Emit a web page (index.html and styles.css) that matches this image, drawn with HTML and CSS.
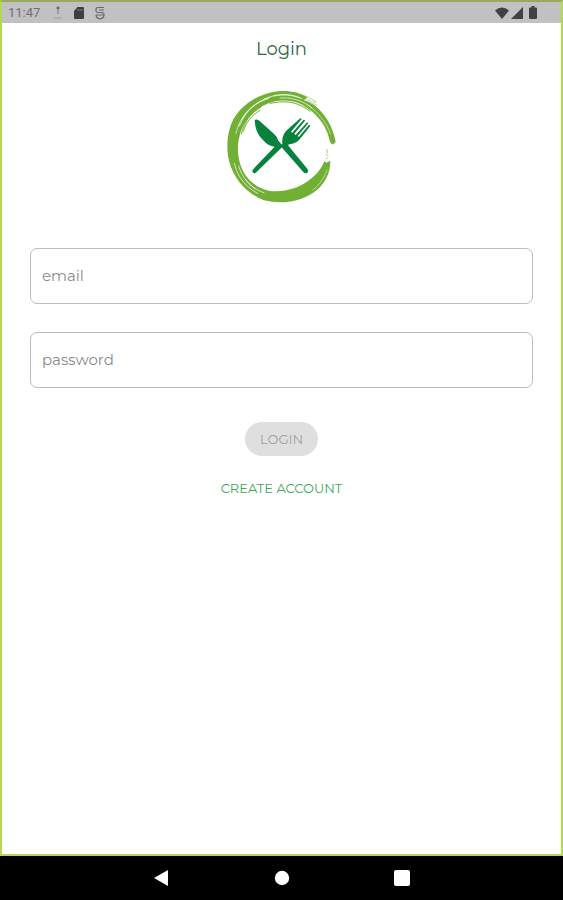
FILE: index.html
```html
<!DOCTYPE html>
<html lang="en">
<head>
<meta charset="utf-8">
<meta name="viewport" content="width=device-width, initial-scale=1">
<title>Login</title>
<link rel="stylesheet" href="styles.css">
</head>
<body>
<div class="screen">
  <header class="status">
    <div class="status-left">
      <span class="clock">11:47</span>
      <svg class="status-icon" viewBox="0 0 12 14"><circle cx="6" cy="2" r="1.500" fill="#666"/><path d="M6 3v5" stroke="#999" stroke-width="2"/><path d="M2 12h8" stroke="#9c9c9c" stroke-width="1"/></svg>
      <svg class="status-icon" viewBox="0 0 12 14"><path d="M4.500 1H10q1 0 1 1v10q0 1-1 1H2q-1 0-1-1V5z" fill="#3f3f3f"/><path d="M5 3v2M7 3v2M9 3v2" stroke="#888" stroke-width="0.800"/></svg>
      <svg class="status-icon" viewBox="0 0 12 14"><path d="M10 1.500H4Q2 1.500 2 3.500V5q0 1.500 2 1.500h4q2 0 2 2V9q0 3-4 4-4-1-4-4M2 9h8M5 4h5" fill="none" stroke="#6a6a6a" stroke-width="1.200"/></svg>
    </div>
    <div class="status-right">
      <svg class="wifi" viewBox="0 0 14 12"><path d="M0 3.500Q7-2.500 14 3.500L7 12z" fill="#414141"/></svg>
      <svg class="signal" viewBox="0 0 12 12"><path d="M12 0v12H0z" fill="#414141"/></svg>
      <svg class="battery" viewBox="0 0 8 13"><path d="M2.500 0h3v1.500H7q1 0 1 1V12q0 1-1 1H1q-1 0-1-1V2.500q0-1 1-1h1.500z" fill="#414141"/></svg>
    </div>
  </header>
  <main class="content">
    <h1 class="title">Login</h1>
    <svg class="logo" viewBox="0 0 372 372" role="img" aria-label="Knife and fork in a painted ring">
      <path fill="#72b035" d="M262 40C236 25 210 19 174 22C117 28 66 61 42 103C21 140 17 193 28 234C42 286 82 330 132 349C190 363 252 352 295 314C318 292 332 262 331 230L320 236L313 232C304 255 290 272 268 288C235 314 188 326 146 320C102 310 71 278 60 238C48 197 54 150 76 115C98 80 132 56 176 50C216 46 247 57 275 82C304 107 322 135 330 174L338 182L347 174C341 142 328 110 304 83C290 67 274 56 252 49Z"/>
      <g fill="none" stroke="#fff" stroke-linecap="round">
        <path stroke-width="2" d="M48 148C59 96 98 55 151 39M65 108C82 75 110 53 145 44M58 126C73 90 94 66 126 50M130 46C165 30 208 29 240 42M160 35C194 28 220 31 246 44M180 42C220 39 250 52 276 72"/>
        <path stroke-width="2" d="M43 238C52 279 77 309 113 328M56 246C64 275 82 297 106 314M75 285C89 304 107 318 132 326"/>
        <path stroke-width="1.500" d="M262 62C296 86 319 115 332 151M278 318C299 302 313 282 321 258"/>
      </g>
      <g fill="none" stroke="#72b035" stroke-linecap="round">
        <path stroke-width="3" d="M64 150C72 114 92 87 122 70M70 142C78 114 95 94 120 79M150 58C205 46 240 58 270 82"/>
        <path stroke-width="2" opacity="0.700" d="M240 31C260 36 276 44 290 54M250 42L286 56M262 52L292 64"/>
        <path stroke-width="3" opacity="0.600" d="M320 196L323 207M317 210L325 216M322 220L318 225"/>
      </g>
      <path fill="#07823d" d="M104 108Q109 104 118 110L160 148Q171 157 174 169L184 181L189 187L109 265Q103 271 98 265Q95 259 101 254L164 188Q145 187 129 168Q111 151 106 125Z"/>
      <path fill="#07823d" d="M239 104Q243 101 245 105L213 143L217 146L250 108Q254 106 255 110L223 149L227 153L260 116Q264 114 265 118L233 156L236 159L266 124Q270 122 271 126L239 166Q228 179 207 181L204 184L263 256Q267 262 261 267Q255 270 250 264L186 191L182 184L187 179Q184 158 198 141Z"/>
    </svg>
    <form class="form">
      <input class="field" type="email" placeholder="email" aria-label="email">
      <input class="field" type="password" placeholder="password" aria-label="password">
      <button class="login" type="submit" disabled>LOGIN</button>
      <a class="create" href="#">CREATE ACCOUNT</a>
    </form>
  </main>
</div>
<nav class="navbar" aria-label="System navigation">
  <button class="nav-button" aria-label="Back"><svg viewBox="0 0 16 16"><path d="M0 8L14 0v16z" fill="#fff"/></svg></button>
  <button class="nav-button" aria-label="Home"><svg viewBox="0 0 16 16"><circle cx="8" cy="8" r="7.200" fill="#fff"/></svg></button>
  <button class="nav-button" aria-label="Recent apps"><svg viewBox="0 0 16 16"><rect width="16" height="16" rx="2" fill="#fff"/></svg></button>
</nav>
</body>
</html>
```
FILE: styles.css
```css
* { box-sizing: border-box; }
body {
  margin: 0;
  min-height: 100vh;
  display: flex;
  flex-direction: column;
  background: #000;
  font-family: Montserrat, Inter, sans-serif;
}
svg { display: block; }
.screen {
  flex: 1;
  display: flex;
  flex-direction: column;
  background: #fff;
  border: 2px solid #b5d657;
  border-top-color: #98ad5c;
}
.status {
  display: flex;
  justify-content: space-between;
  align-items: center;
  height: 21px;
  padding: 0 24px 0 6px;
  background: #c1c1c1;
}
.status-left, .status-right { display: flex; align-items: center; }
.status-left { gap: 9px; }
.status-right { gap: 2px; }
.clock {
  width: 35px;
  font-family: Roboto, sans-serif;
  font-size: 13px;
  color: #707070;
}
.status-icon { width: 12px; height: 14px; }
.wifi { width: 14px; height: 12px; }
.signal { width: 12px; height: 12px; }
.battery { width: 8px; height: 13px; margin-left: 4px; }
.content {
  display: flex;
  flex-direction: column;
  align-items: center;
  padding: 14px 28px 0;
}
.title {
  margin: 0;
  font-size: 18px;
  line-height: 24px;
  font-weight: 400;
  color: #2c6a45;
}
.logo { width: 124px; height: 124px; margin-top: 23px; }
.form {
  align-self: stretch;
  display: flex;
  flex-direction: column;
  align-items: center;
  margin-top: 40px;
}
.field {
  width: 100%;
  height: 56px;
  margin-bottom: 28px;
  padding: 0 11px 2px;
  border: 1px solid #bdbdbd;
  border-radius: 7px;
  background: #fff;
  font: 400 15px/20px Montserrat, Inter, sans-serif;
  color: #333;
}
.field::placeholder { color: #8a8a8a; opacity: 1; }
.login {
  height: 34px;
  margin-top: 6px;
  padding: 0 15px;
  border: 0;
  border-radius: 17px;
  background: #dfdfdf;
  font: 400 13px/20px Montserrat, Inter, sans-serif;
  color: #a0a0a0;
}
.create {
  margin-top: 22px;
  font-size: 13px;
  line-height: 20px;
  font-weight: 400;
  color: #3fa75e;
  text-decoration: none;
}
.navbar {
  display: flex;
  justify-content: center;
  align-items: center;
  gap: 88px;
  height: 44px;
  background: #000;
}
.nav-button {
  width: 32px;
  height: 32px;
  padding: 8px;
  border: 0;
  background: none;
}
```
